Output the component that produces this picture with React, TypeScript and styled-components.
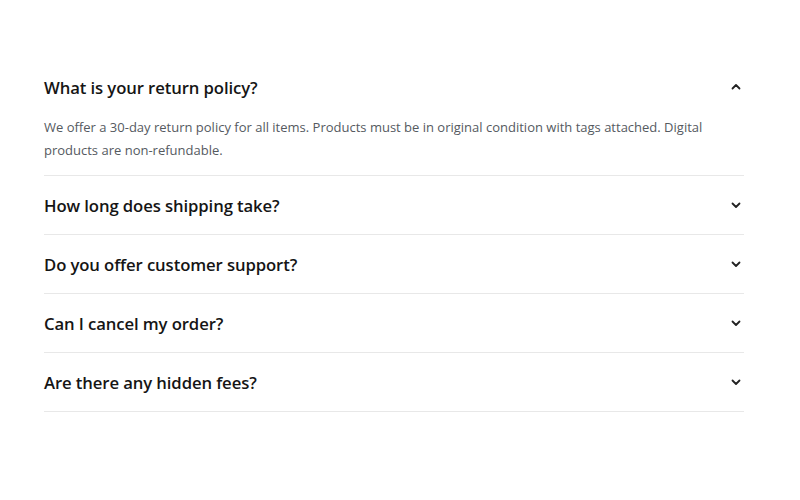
import { useState } from 'react';
import styled, { createGlobalStyle } from 'styled-components';

const GlobalStyle = createGlobalStyle`
	body {
		margin: 0;
		background: #ffffff;
		font-family: "Open Sans", "Noto Sans", sans-serif;
	}
`;

const Page = styled.div`
	padding: 58px 56px 0 44px;
`;

const List = styled.div`
	display: flex;
	flex-direction: column;
`;

const Item = styled.div`
	border-bottom: 1px solid #e8e8e8;
`;

const Header = styled.button`
	display: flex;
	align-items: center;
	justify-content: space-between;
	width: 100%;
	height: 58px;
	padding: 0 2px 0 0;
	border: none;
	background: none;
	cursor: pointer;
	font-family: inherit;
	text-align: left;
`;

const Question = styled.span`
	font-size: 16.7px;
	font-weight: 600;
	color: #151515;
	letter-spacing: -0.1px;
`;

const Chevron = styled.svg<{ $open: boolean }>`
	width: 12px;
	height: 12px;
	transform: rotate(${p => (p.$open ? 180 : 0)}deg);
`;

const Answer = styled.p`
	margin: 0;
	padding: 0 30px 13px 0;
	font-size: 13px;
	line-height: 23px;
	color: #555a5f;
`;

const faqs = [
	{
		q: 'What is your return policy?',
		a: 'We offer a 30-day return policy for all items. Products must be in original condition with tags attached. Digital products are non-refundable.',
	},
	{ q: 'How long does shipping take?', a: 'Standard shipping takes 5-7 business days.' },
	{ q: 'Do you offer customer support?', a: 'Yes, our support team is available 24/7.' },
	{ q: 'Can I cancel my order?', a: 'Orders can be cancelled within 24 hours.' },
	{ q: 'Are there any hidden fees?', a: 'No, all prices include taxes and fees.' },
];

const App = () => {
	const [open, setOpen] = useState<number | null>(0);

	return (
		<Page>
			<GlobalStyle />
			<List>
				{faqs.map((f, i) => (
					<Item key={f.q}>
						<Header onClick={() => setOpen(open === i ? null : i)}>
							<Question>{f.q}</Question>
							<Chevron $open={open === i} viewBox="0 0 12 12" fill="none">
								<path d="M2.5 4.5L6 8l3.5-3.5" stroke="#222" strokeWidth="1.8" strokeLinecap="round" strokeLinejoin="round" />
							</Chevron>
						</Header>
						{open === i && <Answer>{f.a}</Answer>}
					</Item>
				))}
			</List>
		</Page>
	);
};

export default App;
